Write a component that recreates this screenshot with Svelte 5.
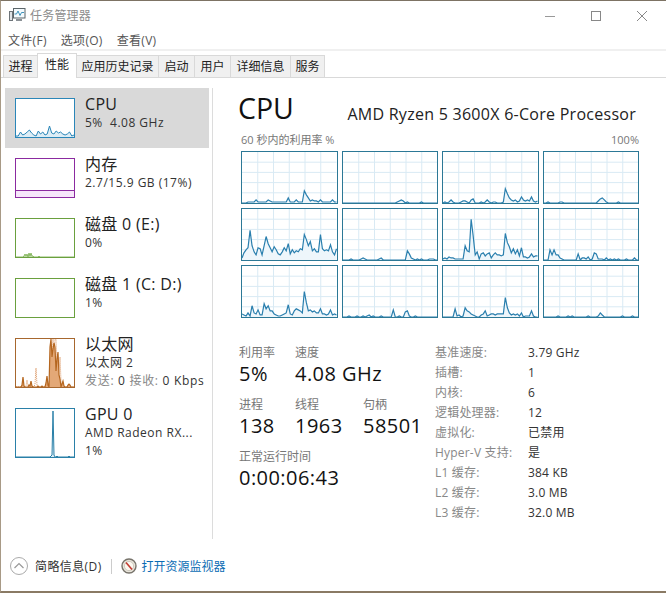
<script>
  const tabs = ['进程', '性能', '应用历史记录', '启动', '用户', '详细信息', '服务'];
  const menus = ['文件(F)', '选项(O)', '查看(V)'];

  // one series per logical processor, 48 samples, height out of 50
  const cores = [
    [0,0,0,1,1,1,1,3,1,1,1,1,1,3,2,1,1,1,1,1,1,1,1,5,1,1,1,3,1,1,1,12,8,5,2,3,2,2,1,3,1,1,1,1,1,3,1,1],
    [0,0,0,0,0,0,0,0,0,0,0,0,0,0,0,0,0,0,0,0,0,0,0,0,0,0,0,1,2,3,2,0,1,0,0,0,0,0,0,1,0,0,0,0,0,0,0,0],
    [0,1,0,1,3,1,0,0,0,1,2,2,1,0,3,4,0,0,0,1,0,1,3,1,0,1,1,0,0,0,1,14,9,5,3,2,3,1,2,6,3,2,3,2,6,2,1,2],
    [0,0,1,0,0,0,0,0,1,1,0,0,0,0,0,0,0,0,0,0,0,0,0,0,0,0,0,2,4,5,3,1,0,0,0,0,0,1,0,0,0,0,0,0,0,0,0,0],
    [2,7,10,12,29,14,8,5,12,11,5,14,23,16,12,8,13,10,6,5,8,12,9,16,6,10,7,9,8,11,10,25,20,14,18,9,11,8,8,25,11,9,10,9,15,8,5,11],
    [0,0,0,0,1,0,0,0,0,1,2,1,0,0,0,0,0,0,1,2,0,0,0,0,0,0,0,0,0,0,0,0,9,6,2,1,0,1,0,1,0,0,0,1,1,1,0,0],
    [1,2,1,3,2,2,1,1,1,1,1,14,9,8,40,24,5,8,1,6,7,4,6,7,2,5,7,5,5,4,5,26,17,13,7,11,6,10,4,12,3,3,2,3,6,3,4,4],
    [0,0,0,10,5,10,5,5,2,1,0,0,0,0,0,0,0,6,0,2,2,1,3,0,1,7,6,1,1,1,0,2,0,1,0,1,0,1,0,0,0,1,0,0,0,2,0,0],
    [3,2,1,4,1,11,4,3,7,2,2,13,8,11,6,6,3,2,1,1,2,3,4,12,3,2,6,8,7,6,4,25,14,6,7,5,6,4,4,8,3,3,2,3,7,2,3,2],
    [0,0,0,1,0,0,0,1,0,0,1,0,1,2,0,1,0,0,0,1,0,0,0,0,0,7,0,0,1,0,0,5,6,1,0,0,1,0,0,0,0,0,0,0,0,0,0,0],
    [0,0,0,0,0,0,8,1,2,0,1,9,6,5,3,2,1,0,0,2,3,6,1,2,3,3,2,3,3,3,3,19,9,4,2,3,2,3,1,4,0,1,1,1,6,1,0,0],
    [0,0,0,0,0,0,0,1,0,0,0,0,1,0,1,0,0,0,0,0,0,0,1,0,0,0,0,1,4,2,0,0,0,0,0,0,0,0,0,1,0,0,0,0,1,0,0,0]
  ];

  // thumbnails are mostly flat, so only the spikes are listed: x -> height, one sample per px
  function spikes(map) {
    return Array.from({ length: 59 }, (_, x) => map[x] ?? 0);
  }

  const cpuThumb = [1,1,5,2,3,5,7,4,2,1,6,3,5,2,3,11,4,3,6,4,5,3,2,3,5,1,2];
  const diskThumb = spikes({ 8: 1, 9: 3, 10: 1, 11: 3, 13: 4, 14: 1, 15: 4, 16: 1, 17: 1, 23: 1 });
  const netThumb = spikes({
    6: 2, 7: 10, 8: 1, 13: 2, 14: 1, 15: 6, 16: 1, 22: 1, 26: 1, 30: 4, 31: 11, 32: 2,
    34: 40, 35: 48, 36: 30, 37: 38, 38: 44, 39: 40, 40: 16, 41: 28, 42: 35, 43: 12, 44: 8, 46: 3, 47: 6, 48: 1, 52: 2, 53: 3, 54: 2
  });
  const netSend = spikes({
    10: 1, 11: 7, 12: 1, 19: 3, 20: 19, 21: 2, 29: 1, 35: 12, 36: 30, 37: 48, 38: 30, 39: 48, 40: 48, 41: 20, 43: 14, 44: 30, 45: 6
  });
  const gpuThumb = spikes({ 35: 1, 36: 2, 37: 46, 38: 2, 41: 1, 53: 1 });

  const side = [
    { name: 'CPU', lines: ['5%  4.08 GHz'], kind: 'cpu', data: cpuThumb, selected: true },
    { name: '内存', lines: ['2.7/15.9 GB (17%)'], kind: 'mem', data: [] },
    { name: '磁盘 0 (E:)', lines: ['0%'], kind: 'disk', data: diskThumb },
    { name: '磁盘 1 (C: D:)', lines: ['1%'], kind: 'disk', data: [] },
    { name: '以太网', lines: ['以太网 2'], net: true, kind: 'net', data: netThumb, second: netSend },
    { name: 'GPU 0', lines: ['AMD Radeon RX...', '1%'], kind: 'gpu', data: gpuThumb, tall: true }
  ];

  const specs = [
    ['基准速度:', '3.79 GHz'],
    ['插槽:', '1'],
    ['内核:', '6'],
    ['逻辑处理器:', '12'],
    ['虚拟化:', '已禁用'],
    ['Hyper-V 支持:', '是'],
    ['L1 缓存:', '384 KB'],
    ['L2 缓存:', '3.0 MB'],
    ['L3 缓存:', '32.0 MB']
  ];

  function linePts(data, w, h) {
    const step = w / (data.length - 1);
    return data.map((v, i) => `${(i * step).toFixed(1)},${h - v}`).join(' ');
  }
  function areaPts(data, w, h) {
    return `0,${h} ${linePts(data, w, h)} ${w},${h}`;
  }
</script>

<div class="win">
  <div class="title">
    <svg class="app-icon" width="17" height="17" viewBox="0 0 17 17">
      <rect x="0.5" y="4.5" width="3" height="9" fill="#dfe3e6" stroke="#6d7479" />
      <rect x="4.5" y="1.5" width="11.5" height="9.5" fill="#f4fafd" stroke="#5b6569" />
      <polyline points="5.5,7 7.5,7 9,4 11,8.5 12.5,5.5 15,5.5" fill="none" stroke="#3f93bb" />
      <rect x="7" y="12" width="6" height="2" fill="#8b9196" />
    </svg>
    <span class="title-text">任务管理器</span>
    <div class="caption">
      <svg width="12" height="12" viewBox="0 0 12 12"><path d="M1 6.5h10" stroke="#999" /></svg>
      <svg width="12" height="12" viewBox="0 0 12 12"><rect x="1.5" y="1.5" width="9" height="9" fill="none" stroke="#888" /></svg>
      <svg width="12" height="12" viewBox="0 0 12 12"><path d="M1 1l10 10M11 1L1 11" stroke="#888" /></svg>
    </div>
  </div>

  <div class="menu">
    {#each menus as m}<span>{m}</span>{/each}
  </div>

  <div class="tabs">
    {#each tabs as t, i}
      <div class="tab" class:active={i === 1}>{t}</div>
    {/each}
  </div>

  <div class="body">
    <div class="side">
      {#each side as s}
        {@const h = s.net || s.tall ? 48 : 38}
        <div class="item" class:selected={s.selected} class:tall={s.net || s.tall}>
          <svg class="thumb {s.kind}" viewBox="0 0 58 {h}" preserveAspectRatio="none">
            {#if s.kind === 'mem'}
              <rect x="0" y="31.5" width="58" height="6.5" class="mem-fill" />
              <line x1="0" x2="58" y1="31.5" y2="31.5" class="stroke" />
            {:else if s.data.length}
              {#if s.second}
                <polyline points={linePts(s.second, 58, h)} class="dotted" />
              {/if}
              <polygon points={areaPts(s.data, 58, h)} class="fill" />
              <polyline points={linePts(s.data, 58, h)} class="stroke" />
            {/if}
          </svg>
          <div class="info">
            <div class="name">{s.name}</div>
            {#each s.lines as l}<div class="sub">{l}</div>{/each}
            {#if s.net}
              <div class="sub net-rate"><span class="dim">发送:</span> 0 <span class="dim">接收:</span> 0 Kbps</div>
            {/if}
          </div>
        </div>
      {/each}
    </div>

    <div class="main">
      <div class="head">
        <div class="big">CPU</div>
        <div class="model">AMD Ryzen 5 3600X 6-Core Processor</div>
      </div>
      <div class="cap">
        <span>60 秒内的利用率 %</span>
        <span>100%</span>
      </div>
      <div class="charts">
        {#each cores as core}
          <svg class="chart" viewBox="0 0 96 50" preserveAspectRatio="none">
            {#each [16, 32, 48, 64, 80] as x}
              <line x1={x} x2={x} y1="0" y2="50" class="grid" />
            {/each}
            {#each [10, 20, 30, 40] as y}
              <line x1="0" x2="96" y1={y} y2={y} class="grid" />
            {/each}
            <polygon points={areaPts(core, 96, 50)} class="core-fill" />
            <polyline points={linePts(core, 96, 50)} class="core-line" />
          </svg>
        {/each}
      </div>

      <div class="stats">
        <div class="left">
          <div class="row">
            <div class="stat w56"><div class="lbl">利用率</div><div class="val">5%</div></div>
            <div class="stat"><div class="lbl">速度</div><div class="val">4.08 GHz</div></div>
          </div>
          <div class="row">
            <div class="stat w56"><div class="lbl">进程</div><div class="val">138</div></div>
            <div class="stat w68"><div class="lbl">线程</div><div class="val">1963</div></div>
            <div class="stat"><div class="lbl">句柄</div><div class="val">58501</div></div>
          </div>
          <div class="row">
            <div class="stat"><div class="lbl">正常运行时间</div><div class="val">0:00:06:43</div></div>
          </div>
        </div>
        <div class="table">
          {#each specs as [k, v]}
            <div class="k">{k}</div>
            <div class="v">{v}</div>
          {/each}
        </div>
      </div>
    </div>
  </div>

  <div class="foot">
    <svg width="18" height="18" viewBox="0 0 18 18">
      <circle cx="9" cy="9" r="8.5" fill="#fff" stroke="#aaa" />
      <path d="M4.5 11l4.5-4.5 4.5 4.5" fill="none" stroke="#999" stroke-width="1.2" />
    </svg>
    <span class="brief">简略信息(D)</span>
    <span class="sep"></span>
    <svg width="16" height="16" viewBox="0 0 16 16">
      <circle cx="8" cy="8" r="7" fill="#e8e4da" stroke="#77736b" stroke-width="1.4" />
      <circle cx="8" cy="8" r="4.6" fill="#fbf8f0" stroke="#b9b4a8" stroke-width="0.6" />
      <path d="M5 4.5l6 7" stroke="#c23a30" stroke-width="1.6" />
    </svg>
    <span class="link">打开资源监视器</span>
  </div>
</div>

<style>
  :global(body) {
    margin: 0;
    background: #fff;
  }
  .win {
    width: 666px;
    height: 593px;
    box-sizing: border-box;
    border-top: 1px solid #7d7364;
    border-left: 1px solid #a89a86;
    border-bottom: 2px solid #8a7a64;
    background: #fff;
    font-family: "Open Sans", "Noto Sans CJK SC", sans-serif;
    display: flex;
    flex-direction: column;
    overflow: hidden;
    color: #222;
  }
  .title {
    height: 29px;
    display: flex;
    align-items: center;
    padding-left: 8px;
    flex: none;
  }
  .app-icon { margin-right: 4px; }
  .title-text {
    font-size: 12px;
    line-height: 16px;
    color: #8d8d8d;
    letter-spacing: 0.2px;
  }
  .caption {
    margin-left: auto;
    display: flex;
    gap: 34px;
    padding-right: 18px;
  }
  .menu {
    height: 21px;
    flex: none;
    display: flex;
    align-items: center;
    gap: 14px;
    padding-left: 7px;
    font-size: 12px;
    letter-spacing: 0.3px;
    color: #555;
    border-bottom: 2px solid #f0f0f0;
    box-sizing: border-box;
  }
  .tabs {
    height: 27px;
    flex: none;
    display: flex;
    align-items: flex-end;
    padding-left: 2px;
    border-bottom: 1px solid #d9d9d9;
    box-sizing: border-box;
  }
  .tab {
    height: 22px;
    box-sizing: border-box;
    background: #f0f0f0;
    border: 1px solid #d9d9d9;
    border-bottom: none;
    margin-right: -1px;
    text-align: center;
    font-size: 12px;
    line-height: 21px;
    color: #222;
  }
  .tab:nth-child(1) { width: 35px; }
  .tab:nth-child(2) { width: 40px; }
  .tab:nth-child(3) { width: 83px; }
  .tab:nth-child(4) { width: 37px; }
  .tab:nth-child(5) { width: 37px; }
  .tab:nth-child(6) { width: 61px; }
  .tab:nth-child(7) { width: 35px; }
  .tab.active {
    background: #fff;
    height: 25px;
    line-height: 22px;
    margin-bottom: -1px;
    position: relative;
  }
  .body {
    flex: 1;
    display: flex;
    min-height: 0;
    padding-top: 10px;
  }
  .side {
    width: 212px;
    box-sizing: border-box;
    padding-left: 4px;
    flex: none;
    height: 451px;
    border-right: 1px solid #dcdcdc;
  }
  .item {
    width: 204px;
    height: 60px;
    box-sizing: border-box;
    display: flex;
    padding: 10px 0 0 10px;
  }
  .item.tall { height: 70px; }
  .item.selected { background: #d9d9d9; }
  .thumb {
    width: 60px;
    height: 40px;
    box-sizing: border-box;
    border: 1px solid;
    background: #fff;
    flex: none;
    margin-right: 10px;
  }
  .tall .thumb { height: 50px; }
  .thumb .stroke { fill: none; stroke-width: 1; }
  .thumb .dotted { fill: none; stroke: #dc9560; stroke-width: 1; stroke-dasharray: 1 1; }
  .thumb.cpu { border-color: #2a86b8; }
  .thumb.cpu .stroke { stroke: #2a86b8; }
  .thumb.cpu .fill { fill: #dcedf6; }
  .thumb.mem { border-color: #8b2aa0; }
  .thumb.mem .stroke { stroke: #8b2aa0; }
  .mem-fill { fill: #f6e6fa; }
  .thumb.disk { border-color: #6aa03e; }
  .thumb.disk .stroke { stroke: #8cba68; }
  .thumb.disk .fill { fill: #bcd9a4; }
  .thumb.net { border-color: #a7672e; }
  .thumb.net .stroke { stroke: #b5661f; stroke-width: 1.2; }
  .thumb.net .fill { fill: #e3a877; }
  .thumb.gpu { border-color: #2a80a8; }
  .thumb.gpu .stroke { stroke: #2a80a8; }
  .thumb.gpu .fill { fill: #dcedf6; }
  .info { margin-top: -4px; }
  .name {
    font-size: 16px;
    line-height: 20px;
    color: #222;
    white-space: nowrap;
    letter-spacing: 0.3px;
  }
  .sub {
    font-size: 12px;
    line-height: 18px;
    color: #333;
    white-space: pre;
    letter-spacing: 0.5px;
  }
  .net-rate { letter-spacing: 0.7px; }
  .dim { color: #888; }
  .main {
    flex: 1;
    padding: 0 27px 0 25px;
    min-width: 0;
  }
  .head {
    display: flex;
    justify-content: space-between;
    align-items: flex-start;
    height: 42px;
    padding-right: 3px;
  }
  .big {
    font-size: 28.5px;
    line-height: 40px;
    color: #111;
  }
  .model {
    font-size: 16px;
    line-height: 30px;
    margin-top: 11px;
    color: #222;
    white-space: nowrap;
    letter-spacing: 0.27px;
  }
  .cap {
    display: flex;
    justify-content: space-between;
    font-size: 11px;
    color: #777;
    height: 21px;
    line-height: 20px;
    padding-left: 3px;
  }
  .charts {
    display: grid;
    grid-template-columns: repeat(4, 1fr);
    grid-template-rows: repeat(3, 53px);
    gap: 4px;
    padding-left: 3px;
  }
  .chart {
    width: 100%;
    height: 53px;
    box-sizing: border-box;
    border: 1px solid #2c7896;
    background: #fff;
    display: block;
  }
  .grid { stroke: #d9eaf4; stroke-width: 1; vector-effect: non-scaling-stroke; }
  .core-fill { fill: #eef6fb; }
  .core-line { fill: none; stroke: #2a7fae; stroke-width: 1.2; vector-effect: non-scaling-stroke; }
  .stats {
    display: flex;
    margin-top: 27px;
    padding-left: 1px;
  }
  .left { width: 196px; flex: none; }
  .row { display: flex; height: 52px; }
  .w56 { width: 56px; }
  .w68 { width: 68px; }
  .lbl {
    font-size: 12px;
    line-height: 16px;
    color: #777;
  }
  .val {
    font-size: 20px;
    line-height: 26px;
    color: #111;
    white-space: nowrap;
    letter-spacing: 0.45px;
  }
  .table {
    display: grid;
    grid-template-columns: 93px auto;
    grid-auto-rows: 20px;
    font-size: 12px;
    line-height: 20px;
    letter-spacing: 0.2px;
    margin-top: -2px;
  }
  .k { color: #888; white-space: nowrap; }
  .v { color: #333; white-space: nowrap; }
  .foot {
    height: 50px;
    flex: none;
    display: flex;
    align-items: center;
    padding-left: 9px;
    font-size: 12px;
  }
  .brief { margin-left: 7px; color: #333; letter-spacing: 0.4px; }
  .sep {
    width: 1px;
    height: 15px;
    background: #ccc;
    margin: 0 9px;
  }
  .link { color: #0a6cb4; margin-left: 5px; }
</style>
